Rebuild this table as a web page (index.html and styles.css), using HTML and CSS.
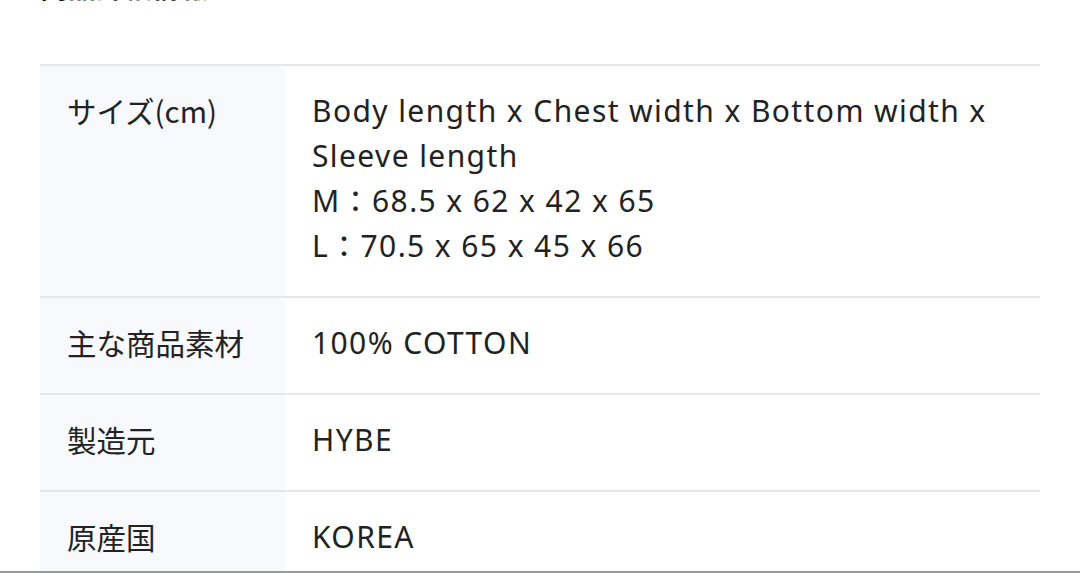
FILE: index.html
```html
<!DOCTYPE html>
<html lang="ja">
<head>
  <meta charset="UTF-8">
  <meta name="viewport" content="width=device-width, initial-scale=1.0">
  <title>商品詳細</title>
  <link rel="stylesheet" href="styles.css">
</head>
<body>
  <div class="container">
    <h2 class="section-title">商品詳細情報</h2>
    <table class="spec-table">
      <tr>
        <th>サイズ(cm)</th>
        <td>
          Body length x Chest width x Bottom width x Sleeve length<br>
          M：68.5 x 62 x 42 x 65<br>
          L：70.5 x 65 x 45 x 66
        </td>
      </tr>
      <tr>
        <th>主な商品素材</th>
        <td>100% COTTON</td>
      </tr>
      <tr>
        <th>製造元</th>
        <td>HYBE</td>
      </tr>
      <tr>
        <th>原産国</th>
        <td>KOREA</td>
      </tr>
    </table>
  </div>
  <div class="bottom-bar"></div>
</body>
</html>
```

FILE: styles.css
```css
body {
  margin: 0;
  background-color: #fff;
  font-family: "Noto Sans", "Noto Sans CJK JP", sans-serif;
  color: #222;
  height: 573px;
  overflow: hidden;
  position: relative;
}

.container {
  padding: 0 40px;
}

.section-title {
  font-family: "Noto Sans CJK JP", sans-serif;
  font-size: 28px;
  font-weight: bold;
  line-height: 30px;
  margin: -29px 0 0;
  height: 30px;
  color: #111;
}

.spec-table {
  width: 100%;
  border-collapse: collapse;
  margin-top: 63px;
  font-size: 30px;
  line-height: 45px;
}

.spec-table tr {
  border-top: 2px solid #e6e6e8;
  border-bottom: 2px solid #e6e6e8;
}

.spec-table th {
  width: 245px;
  box-sizing: border-box;
  background-color: #f8f9fc;
  text-align: left;
  font-weight: normal;
  font-family: "Noto Sans CJK JP", sans-serif;
  font-size: 29.5px;
  vertical-align: top;
  padding: 22px 20px 28px 27px;
}

.spec-table td {
  vertical-align: top;
  padding: 22px 40px 28px 27px;
  letter-spacing: 1.4px;
}

.bottom-bar {
  position: absolute;
  left: 0;
  right: 0;
  bottom: 0;
  height: 2px;
  background-color: #9a9a9a;
}
```
